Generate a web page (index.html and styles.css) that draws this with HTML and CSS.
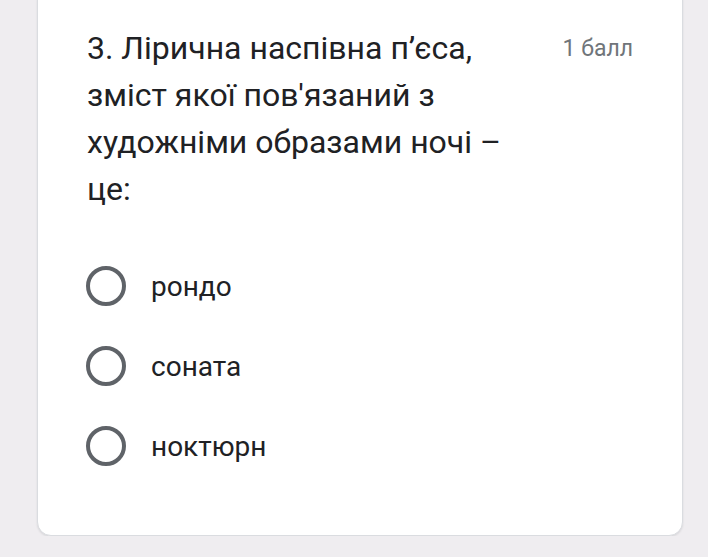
FILE: index.html
```html
<!DOCTYPE html>
<html lang="uk">
<head>
  <meta charset="UTF-8" />
  <meta name="viewport" content="width=device-width, initial-scale=1.0"/>
  <title>Питання 3</title>
  <link rel="stylesheet" href="styles.css">
</head>
<body>
  <div class="card">
    <div class="header">
      <div class="question">3. Лірична наспівна п’єса, зміст якої пов'язаний з художніми образами ночі – це:</div>
      <div class="points">1 балл</div>
    </div>

    <div class="options">
      <label class="option">
        <span class="radio"></span>
        <span class="text">рондо</span>
      </label>
      <label class="option">
        <span class="radio"></span>
        <span class="text">соната</span>
      </label>
      <label class="option">
        <span class="radio"></span>
        <span class="text">ноктюрн</span>
      </label>
    </div>
  </div>
</body>
</html>
```

FILE: styles.css
```css
body {
  margin: 0;
  padding: 0 25px 0 37px;
  background-color: #efedf0;
  font-family: Roboto, "Noto Sans", Arial, sans-serif;
  color: #202124;
  overflow: hidden;
}
.card {
  margin-top: -14px;
  background-color: #fff;
  border: 1px solid #dadce0;
  border-radius: 14px;
  box-shadow: 0 1px 2px rgba(60,64,67,0.12);
  padding: 38px 49px 49px 48px;
}
.header {
  display: flex;
  justify-content: space-between;
  align-items: flex-start;
}
.question {
  max-width: 440px;
  padding-left: 1px;
  font-size: 32px;
  line-height: 47px;
}
.points {
  font-size: 23px;
  line-height: 47px;
  color: #70757a;
}
.options {
  margin-top: 33px;
}
.option {
  display: flex;
  align-items: center;
  height: 80px;
}
.radio {
  width: 32px;
  height: 32px;
  border: 4px solid #5f6368;
  border-radius: 50%;
  margin-right: 25px;
}
.text {
  font-size: 28px;
  color: #202124;
}
```
